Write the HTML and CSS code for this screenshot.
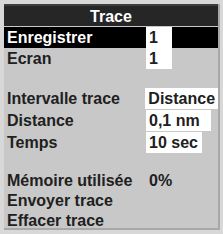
FILE: index.html
```html
<!DOCTYPE html>
<html lang="fr">
<head>
  <meta charset="UTF-8" />
  <title>Trace</title>
  <link rel="stylesheet" href="styles.css">
</head>
<body>
  <div class="screen">
    <div class="panel">
      <div class="title">Trace</div>

      <div class="group first">
        <div class="row selected">
          <span class="label">Enregistrer</span>
          <span class="value box small">1</span>
        </div>
        <div class="row">
          <span class="label">Ecran</span>
          <span class="value box small">1</span>
        </div>
      </div>

      <div class="group settings">
        <div class="row">
          <span class="label">Intervalle trace</span>
          <span class="value box wide">Distance</span>
        </div>
        <div class="row">
          <span class="label">Distance</span>
          <span class="value box mid">0,1 nm</span>
        </div>
        <div class="row">
          <span class="label">Temps</span>
          <span class="value box short">10 sec</span>
        </div>
      </div>

      <div class="group actions">
        <div class="row">
          <span class="label">Mémoire utilisée</span>
          <span class="value">0%</span>
        </div>
        <div class="row">
          <span class="label">Envoyer trace</span>
        </div>
        <div class="row">
          <span class="label">Effacer trace</span>
        </div>
      </div>
    </div>
  </div>
</body>
</html>
```

FILE: styles.css
```css
* {
  margin: 0;
  padding: 0;
  box-sizing: border-box;
}
body {
  font-family: "Liberation Sans", Arial, sans-serif;
  font-weight: bold;
  background-color: #d8d8d8;
}

/* Outer frame */
.screen {
  width: 223px;
  height: 234px;
  padding: 4px 3px 4px 4px;
  background-color: #d8d8d8;
}
.panel {
  height: 100%;
  background-color: #c8c8c8;
  border-right: 2px solid #a8a8a8;
  border-bottom: 2px solid #a8a8a8;
  overflow: hidden;
}

/* Title bar */
.title {
  height: 22px;
  line-height: 21px;
  text-align: center;
  font-size: 16px;
  color: #fff;
  background-color: #262626;
  border-top: 2px solid #3e3e3e;
}

/* Rows */
.row {
  display: flex;
  align-items: center;
  height: 21px;
  font-size: 16px;
  color: #202020;
}
.row.selected {
  background-color: #000;
  color: #fff;
}
.label {
  width: 142px;
  padding-left: 3px;
  white-space: nowrap;
}
.value {
  height: 100%;
  display: flex;
  align-items: center;
  padding-left: 3px;
  color: #202020;
  white-space: nowrap;
}
.box {
  background-color: #fff;
}
.small {
  width: 26px;
}
.wide {
  width: 73px;
}
.mid {
  width: 65px;
}
.short {
  width: 56px;
}

/* Groups */
.group.first {
  margin-top: 1px;
}
.group.settings {
  margin-top: 19px;
}
.settings .row {
  margin-bottom: 1px;
}
.group.actions {
  margin-top: 18px;
}
.actions .row {
  height: 20px;
}
```
